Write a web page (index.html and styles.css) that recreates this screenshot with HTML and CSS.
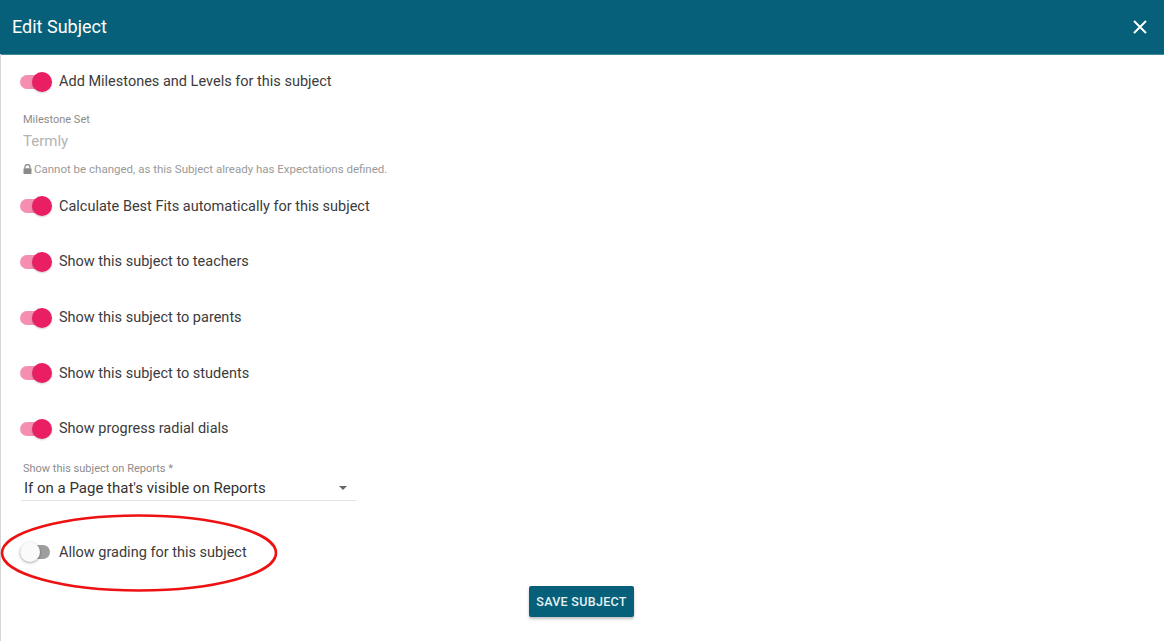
FILE: index.html
```html
<!DOCTYPE html>
<html lang="en">
<head>
    <meta charset="UTF-8">
    <meta name="viewport" content="width=device-width, initial-scale=1.0">
    <title>Edit Subject</title>
    <link rel="stylesheet" href="styles.css">
</head>
<body>
    <div class="dialog">
        <div class="dialog-header">
            <h1>Edit Subject</h1>
            <button class="close-btn" aria-label="Close">
                <svg width="14" height="14" viewBox="0 0 14 14">
                    <path d="M1 1 L13 13 M13 1 L1 13" stroke="#fff" stroke-width="2" fill="none"/>
                </svg>
            </button>
        </div>

        <div class="dialog-body">
            <label class="switch-row">
                <span class="switch on"><span class="thumb"></span></span>
                <span class="switch-label">Add Milestones and Levels for this subject</span>
            </label>

            <div class="field readonly">
                <div class="field-label">Milestone Set</div>
                <div class="field-value">Termly</div>
                <div class="field-note">
                    <svg width="9" height="10" viewBox="0 0 9 10">
                        <path d="M2 4.5 V3 a2.5 2.5 0 0 1 5 0 V4.5" stroke="#8a8a8a" stroke-width="1.3" fill="none"/>
                        <rect x="0.5" y="4.3" width="8" height="5.7" rx="0.8" fill="#8a8a8a"/>
                    </svg>
                    Cannot be changed, as this Subject already has Expectations defined.
                </div>
            </div>

            <label class="switch-row">
                <span class="switch on"><span class="thumb"></span></span>
                <span class="switch-label">Calculate Best Fits automatically for this subject</span>
            </label>
            <label class="switch-row">
                <span class="switch on"><span class="thumb"></span></span>
                <span class="switch-label">Show this subject to teachers</span>
            </label>
            <label class="switch-row">
                <span class="switch on"><span class="thumb"></span></span>
                <span class="switch-label">Show this subject to parents</span>
            </label>
            <label class="switch-row">
                <span class="switch on"><span class="thumb"></span></span>
                <span class="switch-label">Show this subject to students</span>
            </label>
            <label class="switch-row">
                <span class="switch on"><span class="thumb"></span></span>
                <span class="switch-label">Show progress radial dials</span>
            </label>

            <div class="field select-field">
                <div class="field-label">Show this subject on Reports *</div>
                <div class="select">
                    <span>If on a Page that's visible on Reports</span>
                    <span class="arrow"></span>
                </div>
            </div>

            <div class="highlight-wrap">
                <label class="switch-row">
                    <span class="switch"><span class="thumb"></span></span>
                    <span class="switch-label">Allow grading for this subject</span>
                </label>
                <!-- red annotation ring drawn over the row -->
                <svg class="ring" width="282" height="82" viewBox="0 0 282 82">
                    <ellipse cx="139" cy="40" rx="137" ry="37.5" stroke="#ee1111" stroke-width="2.6" fill="none"/>
                </svg>
            </div>

            <div class="actions">
                <button class="save-btn">Save Subject</button>
            </div>
        </div>
    </div>
</body>
</html>
```

FILE: styles.css
```css
body {
    margin: 0;
    font-family: Roboto, "Noto Sans", sans-serif;
    background-color: #fff;
}
.dialog {
    width: 1164px;
    height: 642px;
    overflow: hidden;
}
.dialog-header {
    height: 54px;
    background-color: #076079;
    border-bottom: 1px solid #3f8aa0;
    display: flex;
    justify-content: space-between;
    align-items: center;
    padding: 0 16px 0 12px;
}
.dialog-header h1 {
    margin: 0;
    margin-top: -2px;
    font-size: 18px;
    font-weight: 400;
    color: #fff;
}
.close-btn {
    background: none;
    border: none;
    padding: 0;
    width: 14px;
    height: 14px;
    margin-right: 1px;
    margin-top: -1px;
    cursor: pointer;
}
.dialog-body {
    height: 587px;
    border-left: 1px solid #d6d6d6;
    padding: 0 0 0 19px;
    position: relative;
}

/* switch rows */
.switch-row {
    height: 55.6px;
    display: flex;
    align-items: center;
    gap: 6px;
    cursor: pointer;
}
.dialog-body > .switch-row:first-child {
    margin-top: -1px;
    margin-bottom: -1px;
}
.switch {
    position: relative;
    width: 30px;
    height: 14px;
    border-radius: 7px;
    background-color: #9e9e9e;
    margin-right: 3px;
}
.switch .thumb {
    position: absolute;
    top: -3px;
    left: 0;
    width: 20px;
    height: 20px;
    border-radius: 50%;
    background-color: #fafafa;
    box-shadow: 0 1px 3px rgba(0, 0, 0, 0.35);
}
.switch.on {
    background-color: #f48fb1;
}
.switch.on .thumb {
    left: 12px;
    background-color: #e91e63;
    box-shadow: 0 1px 2px rgba(0, 0, 0, 0.2);
}
.switch-label {
    font-size: 14.5px;
    color: #3b3b3b;
}

/* fields */
.field {
    padding-left: 3px;
}
.field-label {
    font-size: 11px;
    color: #8c8c8c;
    line-height: 14px;
}
.readonly {
    padding-top: 4px;
    height: 66px;
}
.readonly .field-value {
    font-size: 15px;
    color: #b3b3b3;
    line-height: 18px;
    margin-top: 5px;
}
.field-note {
    font-size: 11.5px;
    color: #9a9a9a;
    margin-top: 12px;
    display: flex;
    align-items: center;
    gap: 2px;
}
.select-field {
    width: 336px;
    padding-left: 1px;
    padding-top: 5px;
    height: 64px;
    box-sizing: border-box;
}
.select-field .field-label {
    padding-left: 2px;
}
.select {
    display: flex;
    justify-content: space-between;
    align-items: center;
    height: 24px;
    padding: 0 9px 0 3px;
    border-bottom: 1px solid #e4e4e4;
    font-size: 15px;
    color: #333;
}
.arrow {
    width: 0;
    height: 0;
    border-left: 4px solid transparent;
    border-right: 4px solid transparent;
    border-top: 4px solid #666;
}

/* highlighted row */
.highlight-wrap {
    position: relative;
    margin-top: 4px;
}
.ring {
    position: absolute;
    left: -20px;
    top: -12px;
}

.actions {
    display: flex;
    justify-content: center;
    padding-top: 6px;
    padding-right: 21px;
}
.save-btn {
    height: 31px;
    padding: 0 7px;
    font-family: Roboto, "Noto Sans", sans-serif;
    font-size: 12.5px;
    font-weight: 500;
    letter-spacing: 0.3px;
    text-transform: uppercase;
    color: #e6f1f4;
    background-color: #076079;
    border: none;
    border-radius: 2px;
    box-shadow: 0 2px 3px rgba(0, 0, 0, 0.25);
    cursor: pointer;
}
```
